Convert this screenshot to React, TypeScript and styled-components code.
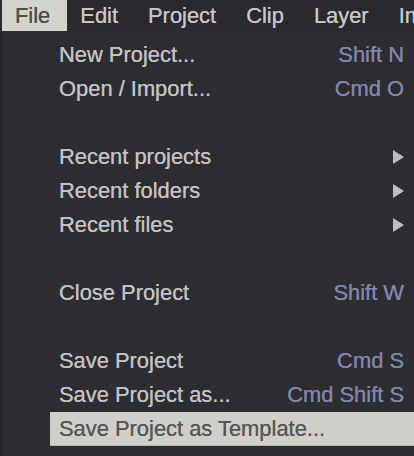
import * as React from 'react';
import styled, { createGlobalStyle } from 'styled-components';

const GlobalStyle = createGlobalStyle`
    html, body {
        margin: 0;
        padding: 0;
        background: #2d2c31;
        overflow: hidden;
    }
    body {
        font-family: "Liberation Sans", Arial, sans-serif;
    }
`;

const Screen = styled.div`
    width: 414px;
    height: 456px;
    display: flex;
    flex-direction: column;
    background: #2d2c31;
    overflow: hidden;
`;

const MenuBar = styled.div`
    display: flex;
    height: 31px;
    padding-left: 2px;
    background: #2a292e;
    white-space: nowrap;
`;

const BarItem = styled.div<{ $open?: boolean }>`
    display: flex;
    align-items: center;
    padding: 0 17px 0 13px;
    font-size: 21.9px;
    color: ${p => p.$open ? '#4e4e4e' : '#c6c6c6'};
    background: ${p => p.$open ? '#d4d4ce' : 'transparent'};
    text-shadow: 0 0 0.5px currentColor;
`;

const Dropdown = styled.div`
    flex: 1;
    display: flex;
    flex-direction: column;
    padding: 7px 0 0 48px;
    border-left: 2px solid #242327;
`;

const Row = styled.div<{ $active?: boolean }>`
    display: flex;
    align-items: center;
    justify-content: space-between;
    height: 34px;
    box-sizing: border-box;
    padding: 0 10px 0 9px;
    font-size: 21.9px;
    color: ${p => p.$active ? '#585858' : '#c2c2c2'};
    background: ${p => p.$active ? '#cfd0ca' : 'transparent'};
    border-bottom: 1px solid ${p => p.$active ? '#b4b5b0' : 'transparent'};
    text-shadow: 0 0 0.5px currentColor;
    white-space: nowrap;
`;

const Gap = styled.div`
    height: 34px;
`;

const Shortcut = styled.span`
    color: #7f86ad;
`;

const Arrow = styled.span`
    width: 0;
    height: 0;
    border-top: 7.5px solid transparent;
    border-bottom: 7.5px solid transparent;
    border-left: 11px solid #bdbdbd;
`;

type Item =
    | { kind: 'item'; label: string; shortcut?: string; sub?: boolean; active?: boolean }
    | { kind: 'gap' };

const items: Item[] = [
    { kind: 'item', label: 'New Project...', shortcut: 'Shift N' },
    { kind: 'item', label: 'Open / Import...', shortcut: 'Cmd O' },
    { kind: 'gap' },
    { kind: 'item', label: 'Recent projects', sub: true },
    { kind: 'item', label: 'Recent folders', sub: true },
    { kind: 'item', label: 'Recent files', sub: true },
    { kind: 'gap' },
    { kind: 'item', label: 'Close Project', shortcut: 'Shift W' },
    { kind: 'gap' },
    { kind: 'item', label: 'Save Project', shortcut: 'Cmd S' },
    { kind: 'item', label: 'Save Project as...', shortcut: 'Cmd Shift S' },
    { kind: 'item', label: 'Save Project as Template...', active: true },
];

const menus = ['File', 'Edit', 'Project', 'Clip', 'Layer', 'Image'];

export default function App() {
    return (
        <Screen>
            <GlobalStyle />
            <MenuBar>
                {menus.map((m, i) => (
                    <BarItem key={m} $open={i === 0}>{m}</BarItem>
                ))}
            </MenuBar>
            <Dropdown>
                {items.map((it, i) => {
                    if (it.kind === 'gap')
                        return <Gap key={i} />;
                    return (
                        <Row key={i} $active={it.active}>
                            <span>{it.label}</span>
                            {it.shortcut && <Shortcut>{it.shortcut}</Shortcut>}
                            {it.sub && <Arrow />}
                        </Row>
                    );
                })}
            </Dropdown>
        </Screen>
    );
}
